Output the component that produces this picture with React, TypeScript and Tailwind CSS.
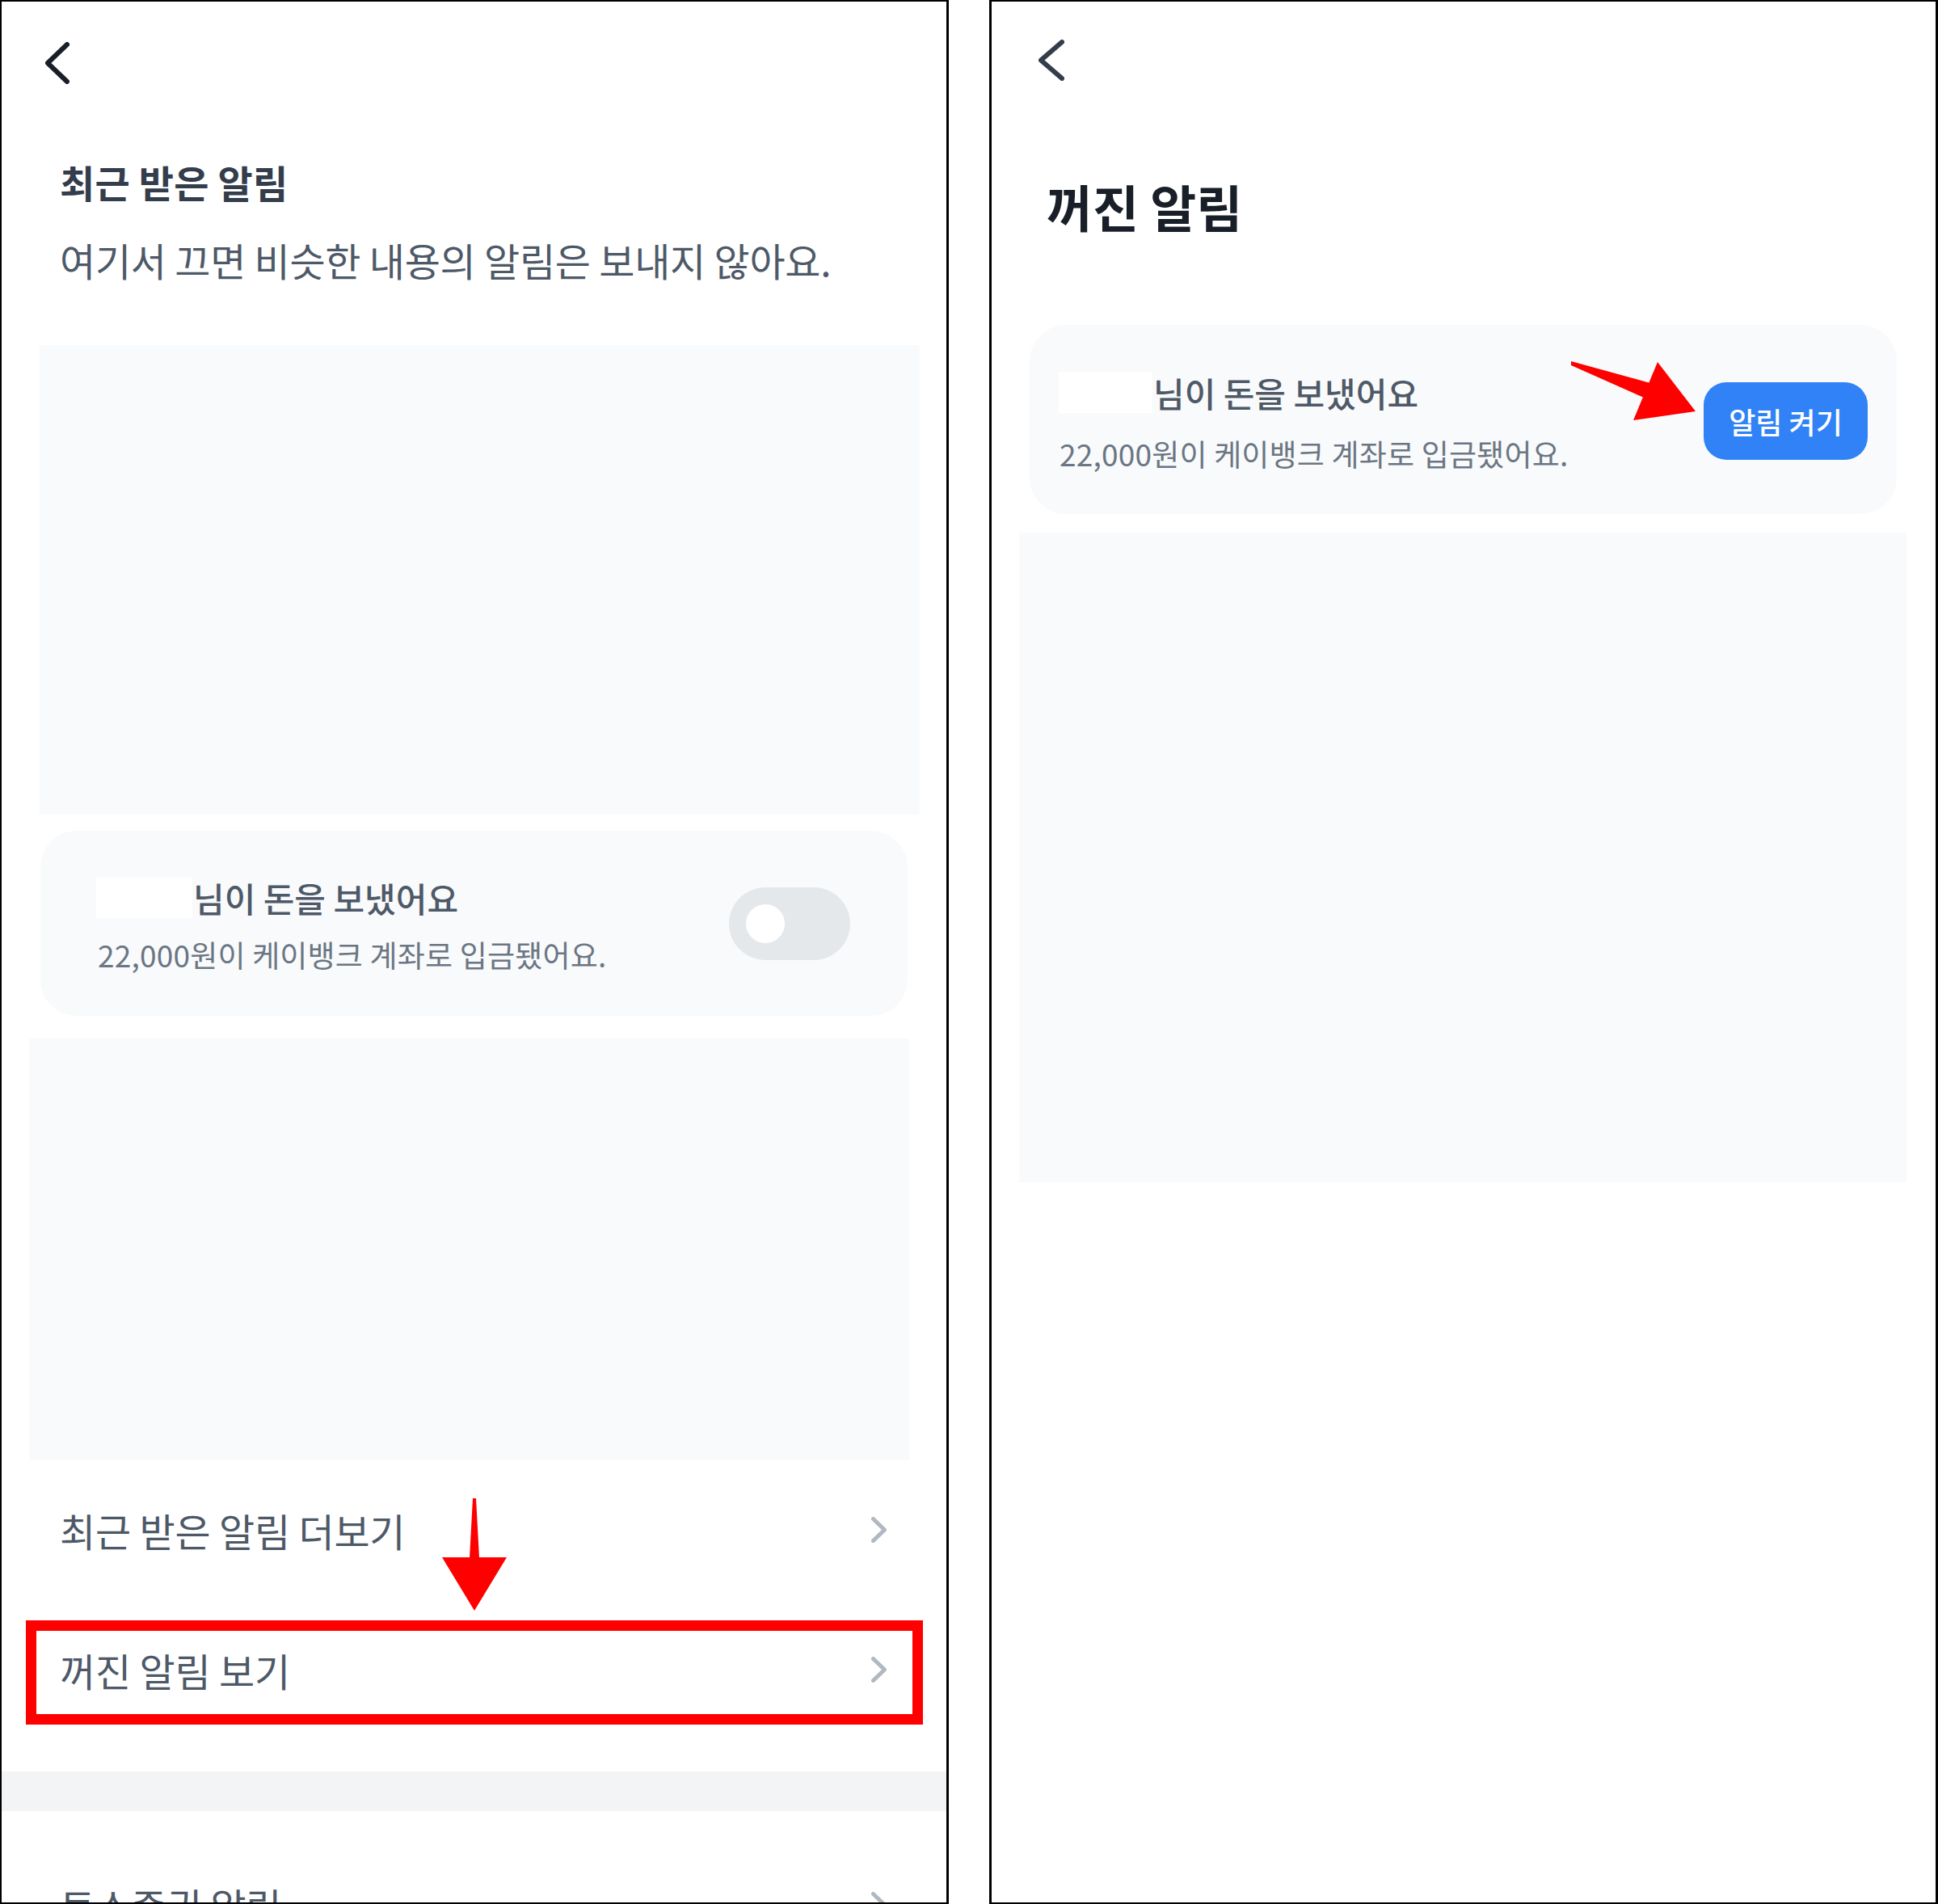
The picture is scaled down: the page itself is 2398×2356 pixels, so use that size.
import React from "react";

const FONT = "font-['Noto_Sans_CJK_KR','Noto_Sans',sans-serif]";

function RowChevron() {
  return (
    <svg width="19" height="32" viewBox="0 0 19 32" className="shrink-0">
      <path d="M2.5 2.5 L16.5 16 L2.5 29.5" stroke="#b0b8c1" strokeWidth="5" fill="none" strokeLinecap="round" strokeLinejoin="round" />
    </svg>
  );
}

function MenuRow({ label, h }: { label: string; h: string }) {
  return (
    <div className={`${h} shrink-0 flex items-center justify-between pl-[72px] pr-[74px]`}>
      <span className="text-[48px] leading-[60px] text-[#4e5968] tracking-[-0.2px] whitespace-nowrap">{label}</span>
      <RowChevron />
    </div>
  );
}

export default function App() {
  return (
    <div className={`flex w-[2398px] h-[2356px] bg-white overflow-hidden ${FONT}`}>
      {/* Left panel */}
      <div className="relative w-[1174px] h-full shrink-0 overflow-hidden border-black border-l-2 border-t-2 border-r-[3px] border-b-2 flex flex-col">
        <svg width="30" height="52" viewBox="0 0 30 52" className="ml-[54px] mt-[50px] shrink-0">
          <path d="M27 3 L3 26 L27 49" stroke="#191f28" strokeWidth="6" fill="none" strokeLinecap="round" strokeLinejoin="round" />
        </svg>
        <h1 className="mt-[91px] pl-[72px] text-[47px] leading-[60px] font-bold text-[#333d4b] tracking-[0.2px] shrink-0">최근 받은 알림</h1>
        <p className="mt-[36px] pl-[72px] text-[48px] leading-[60px] text-[#4e5968] tracking-[-0.25px] whitespace-nowrap shrink-0">
          여기서 끄면 비슷한 내용의 알림은 보내지 않아요.
        </p>
        <div className="mt-[76px] ml-[47px] w-[1089px] h-[581px] bg-[#f9fafb] shrink-0" />
        <div className="mt-[20px] mx-[48px] h-[229px] shrink-0 rounded-[45px] bg-[#f9fafb] flex items-start justify-between pl-[69px] pr-[71px]">
          <div className="pt-[58px] flex flex-col">
            <div className="flex items-center h-[50px]">
              <div className="w-[119px] h-[50px] bg-white" />
              <span className="ml-[1px] text-[42px] leading-[50px] font-medium text-[#4e5968] whitespace-nowrap">님이 돈을 보냈어요</span>
            </div>
            <div className="mt-[22px] pl-[2px] text-[37px] leading-[46px] text-[#6b7684] tracking-[0.2px] whitespace-nowrap">
              22,000원이 케이뱅크 계좌로 입금됐어요.
            </div>
          </div>
          <div className="self-center w-[150px] h-[90px] rounded-full bg-[#e5e8eb] flex items-center pl-[21px] shrink-0">
            <div className="w-[48px] h-[48px] rounded-full bg-white" />
          </div>
        </div>
        <div className="mt-[28px] ml-[34px] w-[1089px] h-[521px] bg-[#f9fafb] shrink-0" />
        <MenuRow label="최근 받은 알림 더보기" h="h-[174px]" />
        <MenuRow label="꺼진 알림 보기" h="h-[172px]" />
        <div className="mt-[40px] h-[49px] w-full bg-[#f2f4f6] shrink-0" />
        <MenuRow label="토스증권 알림" h="h-[232px]" />

        {/* annotation: red box */}
        <div className="absolute left-[30px] top-[2003px] w-[1110px] h-[129px] border-[13px] border-[#ff0000]" />
        {/* annotation: down arrow */}
        <svg className="absolute left-[538px] top-[1848px]" width="95" height="150" viewBox="540 1850 95 150">
          <polygon points="585,1854 589,1854 593,1928 581,1928" fill="#ff0000" />
          <polygon points="547,1927 627,1927 587,1993" fill="#ff0000" />
        </svg>
      </div>

      {/* Right panel */}
      <div className="relative ml-[50px] w-[1174px] h-full shrink-0 overflow-hidden border-black border-l-[3px] border-t-2 border-r-[3px] border-b-2 flex flex-col">
        <svg width="32" height="51" viewBox="0 0 32 51" className="ml-[58px] mt-[47px] shrink-0">
          <path d="M29 3 L3 25.5 L29 48" stroke="#333d4b" strokeWidth="6" fill="none" strokeLinecap="round" strokeLinejoin="round" />
        </svg>
        <h1 className="mt-[115px] pl-[68px] text-[62px] leading-[80px] font-bold text-[#191f28] shrink-0">꺼진 알림</h1>
        <div className="mt-[107px] ml-[47px] w-[1073px] h-[234px] shrink-0 rounded-[45px] bg-[#f9fafb] flex items-start justify-between pl-[36px] pr-[36px]">
          <div className="pt-[58px] flex flex-col">
            <div className="flex items-center h-[51px]">
              <div className="w-[116px] h-[51px] bg-white" />
              <span className="ml-[1px] text-[42px] leading-[51px] font-medium text-[#4e5968] whitespace-nowrap">님이 돈을 보냈어요</span>
            </div>
            <div className="mt-[27px] pl-[1px] text-[37px] leading-[46px] text-[#6b7684] tracking-[0.2px] whitespace-nowrap">
              22,000원이 케이뱅크 계좌로 입금됐어요.
            </div>
          </div>
          <div className="self-center mt-[4px] w-[203px] h-[96px] rounded-[28px] bg-[#3182f6] flex items-center justify-center shrink-0">
            <span className="text-[36px] leading-[44px] font-medium text-white whitespace-nowrap">알림 켜기</span>
          </div>
        </div>
        <div className="mt-[23px] ml-[34px] w-[1098px] h-[804px] bg-[#f9fafb] shrink-0" />

        {/* annotation: arrow to button */}
        <svg className="absolute left-[708px] top-[438px]" width="170" height="90" viewBox="1935 440 170 90">
          <polygon points="1944,447 2042,474 2034,492 1944,452" fill="#ff0000" />
          <polygon points="2051,448 2098,509 2021,520" fill="#ff0000" />
        </svg>
      </div>
    </div>
  );
}
